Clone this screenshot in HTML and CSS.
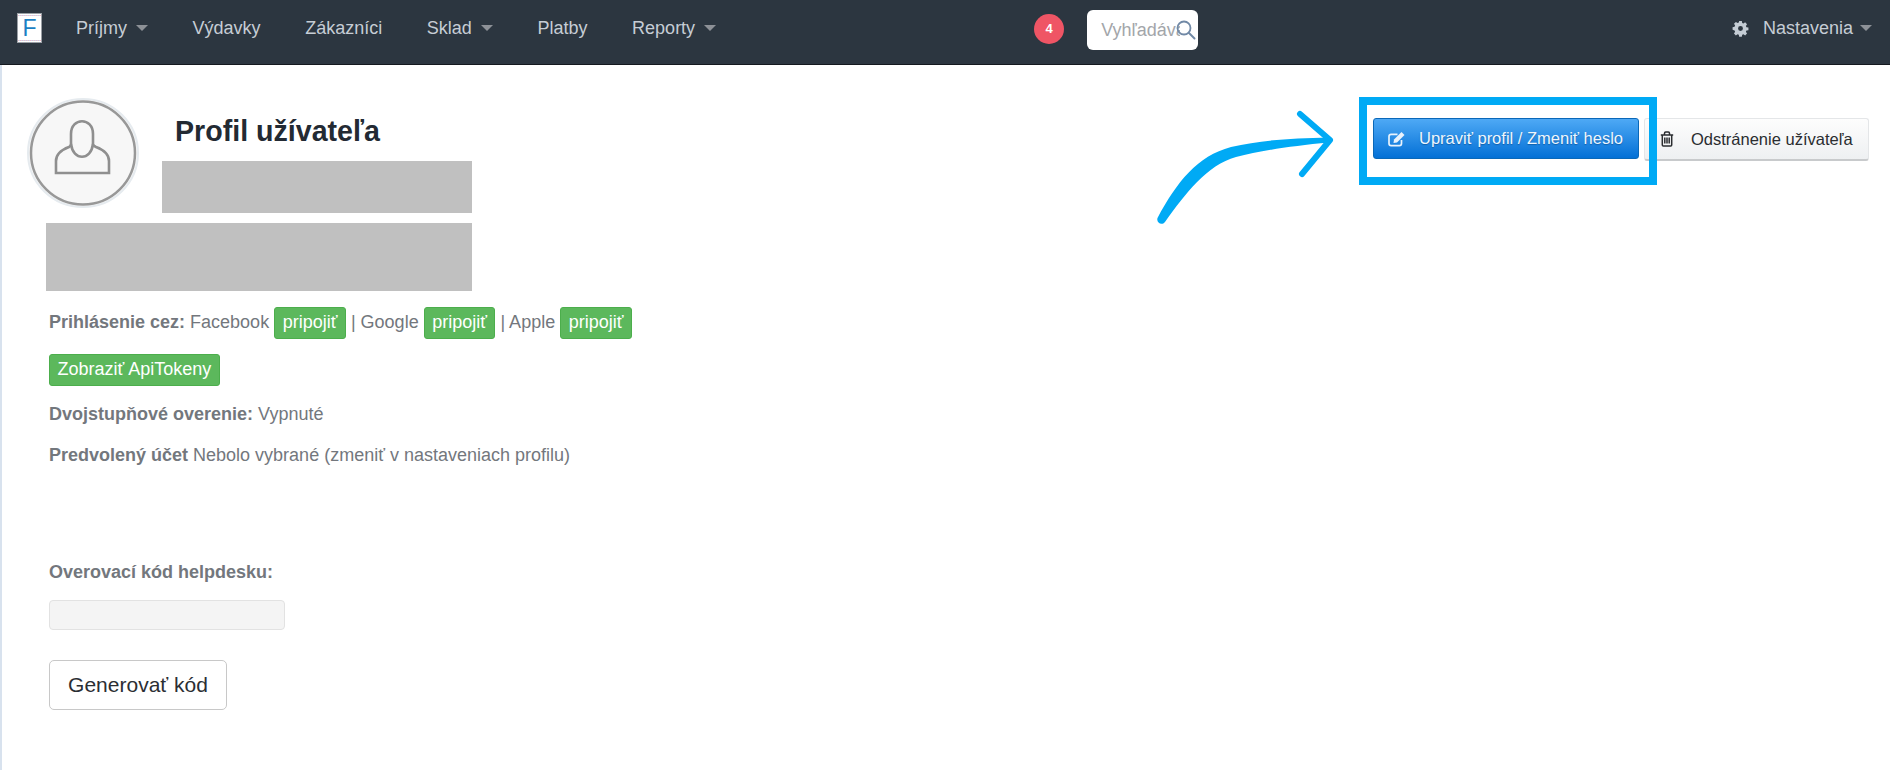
FILE: index.html
```html
<!DOCTYPE html>
<html lang="sk">
<head>
<meta charset="utf-8">
<title>Profil užívateľa</title>
<link rel="stylesheet" href="styles.css">
</head>
<body>
<nav class="navbar">
  <a class="logo"><span class="logo-f">F</span></a>
  <ul class="menu">
    <li>Príjmy<i class="caret"></i></li>
    <li>Výdavky</li>
    <li>Zákazníci</li>
    <li>Sklad<i class="caret"></i></li>
    <li>Platby</li>
    <li>Reporty<i class="caret"></i></li>
  </ul>
  <span class="badge">4</span>
  <div class="search">
    <input class="search-input" type="text" placeholder="Vyhľadávanie">
    <svg class="search-icon" viewBox="0 0 20 20" width="20" height="20"><circle cx="8" cy="8" r="6.500" fill="none" stroke="#7189a6" stroke-width="1.800"/><path d="M13 13L18.500 18.500" stroke="#7189a6" stroke-width="2" stroke-linecap="round"/></svg>
  </div>
  <div class="settings">
    <svg class="gear" viewBox="-1 -1 18 18" width="17" height="17"><path fill="#c4ccd4" fill-rule="evenodd" d="M6.600 0h2.800l.4 2.100 1.300.6 1.800-1.200 2 2-1.200 1.800.6 1.300 2.100.4v2.800l-2.100.4-.6 1.300 1.200 1.800-2 2-1.800-1.200-1.300.6-.4 2.100H6.600l-.4-2.100-1.300-.6-1.800 1.200-2-2 1.200-1.800-.6-1.300L-.4 9.400V6.600l2.100-.4.6-1.300L1.100 3.100l2-2 1.800 1.200 1.300-.6zM8 5.400a2.600 2.600 0 1 0 0 5.200 2.600 2.600 0 0 0 0-5.200z"/></svg>
    <span>Nastavenia</span><i class="caret caret-end"></i>
  </div>
</nav>

<main class="content">
  <header class="profile-head">
    <div class="profile-left">
      <div class="head-row">
        <svg class="avatar" viewBox="0 0 112 110" width="112" height="110">
          <ellipse cx="56" cy="55" rx="55" ry="54" fill="#f7f7f7" stroke="#e6ebef" stroke-width="2"/>
          <ellipse cx="56" cy="55" rx="52" ry="51.500" fill="none" stroke="#989898" stroke-width="2.500"/>
          <path d="M44 36c0-17 22-17 22 0v10c0 1 1 2 3 3 8 3 13 7 13 14v12H29V63c0-7 5-11 13-14 2-1 2-2 2-3z" fill="none" stroke="#8f8f8f" stroke-width="2.600"/>
          <path d="M44 46c2 17 20 17 22 0" fill="none" stroke="#8f8f8f" stroke-width="2.600"/>
        </svg>
        <div class="title-col">
          <h1 class="title">Profil užívateľa</h1>
          <div class="redact redact-a"></div>
        </div>
      </div>
      <div class="redact redact-b"></div>
    </div>
    <div class="actions">
      <button class="btn-head btn-blue">
        <svg viewBox="0 0 18 16" width="18" height="16"><path d="M13.500 9v3.500a2.200 2.200 0 0 1-2.200 2.200H3.200A2.200 2.200 0 0 1 1 12.500V5.500a2.200 2.200 0 0 1 2.200-2.200h6.300" fill="none" stroke="#e8f2fc" stroke-width="1.700"/><path d="M6 8.500l7.500-7.500 3 3-7.500 7.500-3.500.6z" fill="#e8f2fc"/></svg>
        Upraviť profil / Zmeniť heslo
      </button>
      <button class="btn-head btn-light">
        <svg viewBox="0 0 14 16" width="14" height="16"><path d="M.8 4h12.400M4.500 4V2.200c0-.7.5-1.200 1.200-1.200h2.600c.7 0 1.200.5 1.200 1.200V4M2.300 4v10c0 .6.400 1 1 1h7.400c.6 0 1-.4 1-1V4M4.800 6.500v6M7 6.500v6M9.200 6.500v6" fill="none" stroke="#2a2d30" stroke-width="1.500"/></svg>
        Odstránenie užívateľa
      </button>
    </div>
  </header>

  <section class="details">
    <p class="row-login"><b>Prihlásenie cez:</b> Facebook <a class="tag">pripojiť</a> | Google <a class="tag">pripojiť</a> | Apple <a class="tag">pripojiť</a></p>
    <p class="row-token"><a class="tag">Zobraziť ApiTokeny</a></p>
    <p class="row-two"><b>Dvojstupňové overenie:</b> Vypnuté</p>
    <p class="row-acc"><b>Predvolený účet</b> Nebolo vybrané (zmeniť v nastaveniach profilu)</p>
  </section>

  <section class="helpdesk">
    <label class="help-label">Overovací kód helpdesku:</label>
    <input class="help-input" type="text" disabled>
    <button class="help-btn">Generovať kód</button>
  </section>
</main>

<div class="frame"></div>
<svg class="arrow" viewBox="0 0 190 125" width="190" height="125">
  <path d="M2.500 108C22 72 42 46 76 37 105 30 135 28.500 174 27.500L174 32.500C135 36 105 41 81 47 52 55 30 84 10 112 7 116 1 113 2.500 108z" fill="#00aaf5"/>
  <path d="M145 4L175 30 147 64" fill="none" stroke="#00aaf5" stroke-width="6" stroke-linecap="round" stroke-linejoin="round"/>
</svg>
</body>
</html>
```
FILE: styles.css
```css
* { box-sizing: border-box; }
html, body { margin: 0; height: 100%; }
body {
  font-family: "Liberation Sans", Arial, sans-serif;
  background: #fff;
  color: #73777d;
  font-size: 18px;
  overflow: hidden;
  position: relative;
}
.navbar {
  height: 65px;
  background: #2c3640;
  border-bottom: 1px solid #15191f;
  display: flex;
  align-items: flex-start;
  color: #c6cdd5;
  font-size: 18px;
}
.logo {
  margin: 13px 0 0 17px;
  width: 25px;
  height: 30px;
  background-color: #fff;
  background-image:
    repeating-linear-gradient(90deg, #f2bcc8 0 1px, #c4dcf0 1px 2px),
    repeating-linear-gradient(90deg, #f2bcc8 0 1px, #c4dcf0 1px 2px);
  background-size: 100% 1px, 100% 1px;
  background-position: 0 1px, 0 26px;
  background-repeat: no-repeat;
  border: 1px solid #9ba0a6;
  display: flex;
  align-items: center;
  justify-content: center;
}
.logo-f { color: #1b7fc4; font-size: 23px; line-height: 1; }
.menu {
  list-style: none;
  display: flex;
  gap: 44.600px;
  margin: 0 0 0 34px;
  padding: 18px 0 0;
  line-height: 20px;
}
.menu li { display: flex; align-items: center; }
.caret {
  display: inline-block;
  width: 0;
  height: 0;
  margin: 0 0 0 9px;
  border-left: 6px solid transparent;
  border-right: 6px solid transparent;
  border-top: 6px solid #8d9197;
}
.caret-end { margin-left: 7px; }
.badge {
  margin: 14px 0 0 318px;
  width: 30px;
  height: 30px;
  border-radius: 50%;
  background: #ef5565;
  color: #fff;
  font-size: 13px;
  font-weight: bold;
  line-height: 30px;
  text-align: center;
}
.search {
  position: relative;
  margin: 10px 0 0 23px;
  width: 111px;
  height: 40px;
}
.search-input {
  width: 100%;
  height: 100%;
  border: 0;
  border-radius: 6px;
  padding: 0 18px 0 14px;
  font: 18px "Liberation Sans", Arial, sans-serif;
  background: #fff;
  outline: 0;
}
.search-input::placeholder { color: #a3a6aa; opacity: 1; }
.search-icon { position: absolute; left: 89px; top: 10px; }
.settings {
  margin: 18px 18px 0 auto;
  display: flex;
  align-items: center;
  line-height: 20px;
}
.gear { margin-right: 14px; }
.content {
  height: 705px;
  border-left: 2px solid #d8e2ee;
}
.profile-head {
  display: flex;
  justify-content: space-between;
  padding: 33px 21px 0 25px;
}
.head-row { display: flex; }
.avatar { flex: none; filter: blur(.4px); }
.title-col { margin-left: 23px; }
.title {
  margin: 0;
  padding-left: 13px;
  font-size: 28.600px;
  line-height: 32px;
  height: 63px;
  padding-top: 17px;
  color: #232a33;
  font-weight: bold;
}
.redact { background: #c0c0c0; }
.redact-a { width: 310px; height: 52px; }
.redact-b { width: 426px; height: 68px; margin: 10px 0 0 19px; }
.actions {
  display: flex;
  gap: 5px;
  align-items: flex-start;
  padding-top: 20px;
}
.btn-head {
  font: 16.500px "Liberation Sans", Arial, sans-serif;
  display: flex;
  align-items: center;
  padding: 0;
  border-radius: 3px;
}
.btn-blue {
  width: 266px;
  height: 41px;
  padding-left: 14px;
  gap: 13px;
  color: #eef6fd;
  text-shadow: 0 1px 1px rgba(0, 60, 120, .5);
  background: linear-gradient(#4ea9f5, #0370d6);
  border: 1px solid #0a68b8;
}
.btn-light {
  width: 225px;
  height: 43px;
  padding-left: 15px;
  gap: 17px;
  color: #2a2d30;
  background: linear-gradient(#fdfdfd, #eef0f2);
  border: 1px solid #e4e6e8;
  border-bottom: 2px solid #c8cacc;
}
.details {
  padding-left: 47px;
  margin-top: 16px;
}
.details p { margin: 0; }
.tag {
  display: inline-block;
  background: #5cb85c;
  border: 1px solid #4cae4c;
  border-radius: 3px;
  color: #fff;
  padding: 0 7.500px;
  height: 32px;
  line-height: 28px;
}
.row-login { height: 32px; line-height: 30px; }
.row-token { margin-top: 15px !important; height: 32px; line-height: 30px; }
.row-two { margin-top: 16px !important; line-height: 24px; }
.row-acc { margin-top: 17px !important; line-height: 24px; }
.helpdesk {
  padding-left: 47px;
  margin-top: 93px;
  display: flex;
  flex-direction: column;
  align-items: flex-start;
}
.help-label { font-weight: bold; line-height: 24px; }
.help-input {
  width: 236px;
  height: 30px;
  margin-top: 16px;
  background: #f4f4f4;
  border: 1px solid #e2e2e2;
  border-radius: 4px;
}
.help-btn {
  width: 178px;
  height: 50px;
  margin-top: 30px;
  font: 21px "Liberation Sans", Arial, sans-serif;
  color: #2b2e33;
  background: #fff;
  border: 1px solid #c8c8c8;
  border-radius: 5px;
}
.frame {
  position: absolute;
  left: 1359px;
  top: 97px;
  width: 298px;
  height: 88px;
  border: 8px solid #00aaf5;
  pointer-events: none;
}
.arrow {
  position: absolute;
  left: 1155px;
  top: 110px;
  pointer-events: none;
}
```
